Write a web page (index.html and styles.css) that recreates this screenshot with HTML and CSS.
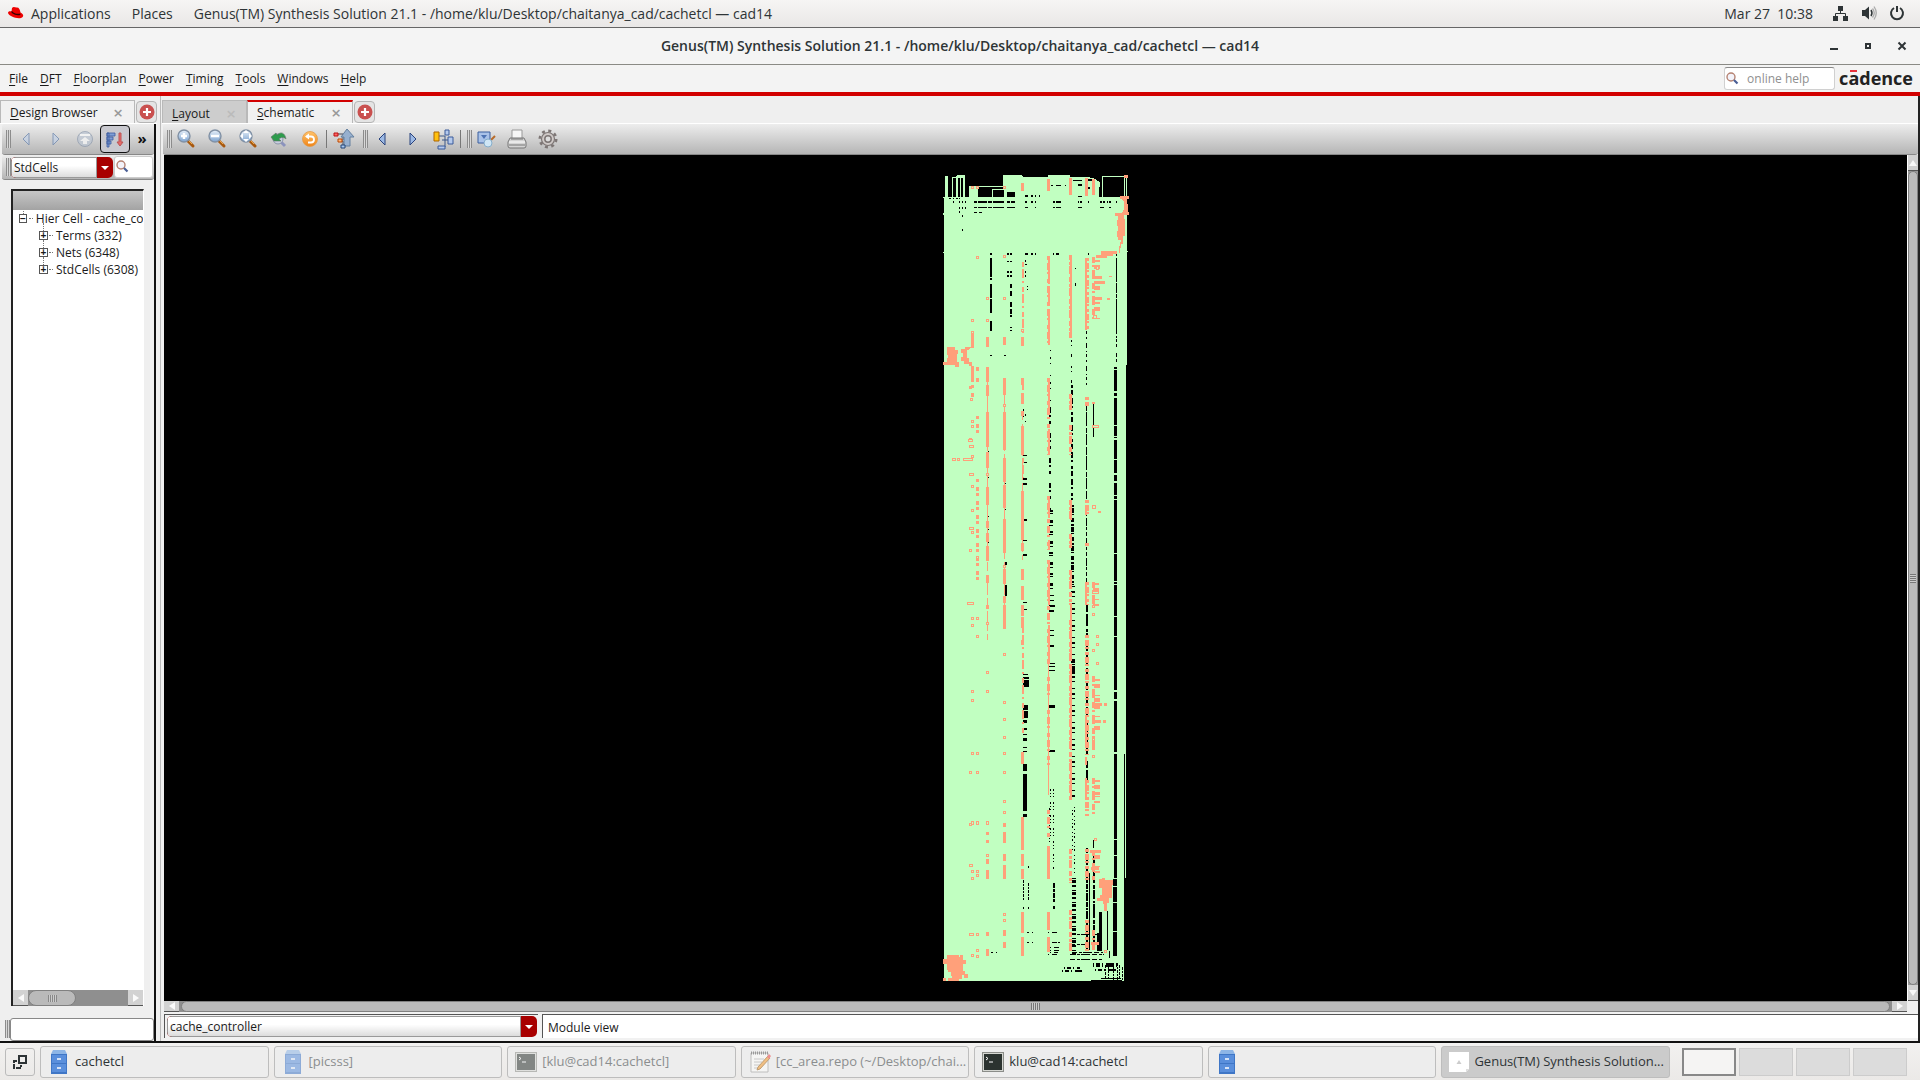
FILE: index.html
```html
<!DOCTYPE html>
<html lang="en">
<head>
<meta charset="utf-8">
<title>Genus(TM) Synthesis Solution 21.1</title>
<link rel="stylesheet" href="styles.css">
</head>
<body>
<svg class="defs" width="0" height="0" aria-hidden="true">
  <defs>
    <linearGradient id="blue" x1="0" y1="0" x2="0" y2="1"><stop offset="0" stop-color="#e8f1fa"/><stop offset="1" stop-color="#7da3cf"/></linearGradient>
    <linearGradient id="orange" x1="0" y1="0" x2="0" y2="1"><stop offset="0" stop-color="#ffc36b"/><stop offset="1" stop-color="#ee8418"/></linearGradient>
    <symbol id="lens" viewBox="0 0 20 20">
      <path d="M12 12l5 5" stroke="#a8590f" stroke-width="3" stroke-linecap="round"/>
      <path d="M12 11l4 4" stroke="#f0a848" stroke-width="1"/>
      <circle cx="8" cy="7" r="6" fill="url(#blue)" stroke="#8191a5" stroke-width="1.4"/>
    </symbol>
    <symbol id="search" viewBox="0 0 14 14">
      <circle cx="6" cy="5" r="4" fill="#f3f3fa" stroke="#b58272" stroke-width="1.4"/>
      <path d="M9 8l3.500 3.500" stroke="#4a5f96" stroke-width="2.200"/>
    </symbol>
    <symbol id="plus" viewBox="0 0 16 16">
      <circle cx="8" cy="8" r="7.500" fill="#c9504f"/><path d="M8 4v8M4 8h8" stroke="#fff" stroke-width="2.200"/>
    </symbol>
    <symbol id="cabinet" viewBox="0 0 16 24">
      <path d="M2 0h12l2 4H0z" fill="#8db5e6"/><path d="M0 4h16v20H0z" fill="#3f76c6"/>
      <path d="M1 5h14v8H1zM1 14h14v8H1z" fill="#5a8fdc"/><path d="M6 9h4M6 18h4" stroke="#fff" stroke-width="1.500"/>
    </symbol>
    <symbol id="terminal" viewBox="0 0 22 20">
      <path d="M0 0h22v20H0z" fill="#8b8d89"/><path d="M1 1h20v18H1z" fill="#d5d7d2"/><path d="M2 2h18v16H2z" fill="#2b3330"/>
      <path d="M4 5l2 1.500L4 8M7 10h4" fill="none" stroke="#fff"/>
    </symbol>
  </defs>
</svg>

<header class="panel">
  <svg class="hat" viewBox="0 0 16 12"><path d="M4 1c2-2 3 0 5-.5 2 0 3 2 3.500 5C16 7 16 10 13 11 8 12 1 9 0 6c0-2 2-2 3.500-1.500z" fill="#e00"/><path d="M3.500 4.500C5 7 9 8 12.300 7.200" fill="none" stroke="#300" stroke-width="1.400"/></svg>
  <a href="#" class="panel-apps">Applications</a>
  <a href="#" class="panel-places">Places</a>
  <a href="#">Genus(TM) Synthesis Solution 21.1 - /home/klu/Desktop/chaitanya_cad/cachetcl — cad14</a>
  <time>Mar 27 &nbsp;10:38</time>
  <div class="tray">
    <svg viewBox="0 0 16 16" width="16" height="16"><path d="M5 1h5v5H5zM0 11h5v5H0zM10 11h5v5h-5z" fill="#2e3436"/><path d="M7.500 6v2.500M2.500 11V8.500h10V11" fill="none" stroke="#2e3436"/></svg>
    <svg viewBox="0 0 16 16" width="16" height="16"><path d="M1 5h3l4-3.500v13L4 11H1z" fill="#2e3436"/><path d="M10 5q2 3 0 6" fill="none" stroke="#2e3436" stroke-width="1.500"/><path d="M11.500 3.500q3.500 4.500 0 9M13 1.500q4.500 6.500 0 13" fill="none" stroke="#aaa" stroke-width="1.300"/></svg>
    <svg viewBox="0 0 16 16" width="16" height="16"><path d="M5 3a6 6 0 1 0 6 0M8 1v6" fill="none" stroke="#2e3436" stroke-width="2"/></svg>
  </div>
</header>

<div class="titlebar">
  <h1>Genus(TM) Synthesis Solution 21.1 - /home/klu/Desktop/chaitanya_cad/cachetcl — cad14</h1>
  <div class="window-buttons">
    <button aria-label="Minimize"><svg viewBox="0 0 10 10"><path d="M1 8h8" stroke="#2e3436" stroke-width="2"/></svg></button>
    <button aria-label="Restore"><svg viewBox="0 0 10 10"><path d="M3 3h4v4H3z" fill="none" stroke="#2e3436" stroke-width="2"/></svg></button>
    <button aria-label="Close"><svg viewBox="0 0 10 10"><path d="M1.500 1.500l7 7M8.500 1.500l-7 7" stroke="#2e3436" stroke-width="2"/></svg></button>
  </div>
</div>

<nav class="menubar">
  <a href="#"><u>F</u>ile</a><a href="#"><u>D</u>FT</a><a href="#"><u>F</u>loorplan</a><a href="#"><u>P</u>ower</a><a href="#"><u>T</u>iming</a><a href="#"><u>T</u>ools</a><a href="#"><u>W</u>indows</a><a href="#"><u>H</u>elp</a>
  <label class="help-search"><svg width="14" height="14"><use href="#search"/></svg><input type="text" placeholder="online help" aria-label="online help"></label>
  <span class="brand">c<span class="macron">a</span>dence</span>
</nav>

<main class="workspace">
  <aside class="browser">
    <div class="tabs">
      <div class="tab active browser-tab"><span><u>D</u>esign Browser</span><button aria-label="Close tab">×</button></div>
      <button class="add" aria-label="Add"><svg width="16" height="16"><use href="#plus"/></svg></button>
    </div>
    <div class="browser-body">
      <div class="toolbar">
        <i class="grip"></i>
        <button class="tool faded" aria-label="Back"><svg width="20" height="20" viewBox="0 0 20 20"><path d="M13 4v12L7 10z" fill="#c3d2e8" stroke="#5d7ba8"/></svg></button>
        <button class="tool faded" aria-label="Forward"><svg width="20" height="20" viewBox="0 0 20 20"><path d="M7 4v12l6-6z" fill="#c3d2e8" stroke="#5d7ba8"/></svg></button>
        <button class="tool faded" aria-label="Up"><svg width="20" height="20" viewBox="0 0 20 20"><circle cx="10" cy="10" r="7.500" fill="#bcc6d4" stroke="#8795aa"/><path d="M5 6h10" stroke="#fff" stroke-width="2"/><path d="M10 8l5 4h-3v3H8v-3H5z" fill="#fff"/></svg></button>
        <button class="tool pressed" aria-label="Sort"><svg width="20" height="20" viewBox="0 0 20 20"><path d="M2 4h8v3H2zM2 8h6v3H2zM2 12h4v3H2zM2 4h2v14H2z" fill="#7f9fd6" stroke="#3d5c9e" stroke-width=".8"/><path d="M14 4h2v9h2l-3 4-3-4h2z" fill="#e76a6a" stroke="#b55"/></svg></button>
        <button class="tool more" aria-label="More">»</button>
      </div>
      <div class="toolbar filter">
        <i class="grip"></i>
        <span class="combo"><select aria-label="Object type"><option>StdCells</option></select></span>
        <label class="find"><svg width="14" height="14"><use href="#search"/></svg><input type="text" aria-label="Find"></label>
      </div>
      <div class="tree">
        <div class="tree-head"></div>
        <ul>
          <li class="root"><i class="box">−</i>Hier Cell - cache_co</li>
          <li><i class="box">+</i>Terms (332)</li>
          <li><i class="box">+</i>Nets (6348)</li>
          <li><i class="box">+</i>StdCells (6308)</li>
        </ul>
        <div class="hbar"><button class="left" aria-label="Scroll left"></button><span class="track"><i class="thumb"></i></span><button class="right" aria-label="Scroll right"></button></div>
      </div>
      <div class="prompt"><i class="grip"></i><input type="text" aria-label="Command"></div>
    </div>
  </aside>

  <section class="editor">
    <div class="tabs">
      <div class="tab layout-tab"><span><u>L</u>ayout</span><button aria-label="Close tab">×</button></div>
      <div class="tab active red schematic-tab"><span><u>S</u>chematic</span><button aria-label="Close tab">×</button></div>
      <button class="add" aria-label="Add"><svg width="16" height="16"><use href="#plus"/></svg></button>
    </div>
    <div class="toolbar main-tools">
      <i class="grip"></i>
      <button class="tool" aria-label="Zoom in"><svg width="20" height="20" viewBox="0 0 20 20"><use href="#lens"/><path d="M8 4v6M5 7h6" stroke="#fff" stroke-width="2.500"/></svg></button>
      <button class="tool" aria-label="Zoom out"><svg width="20" height="20" viewBox="0 0 20 20"><use href="#lens"/><path d="M4 7h8" stroke="#fff" stroke-width="2.500"/></svg></button>
      <button class="tool" aria-label="Zoom fit"><svg width="20" height="20" viewBox="0 0 20 20"><use href="#lens"/><path d="M8 1l3 3H5zM8 13l3-3H5zM2 7l3-3v6zM14 7l-3-3v6z" fill="#fff"/></svg></button>
      <button class="tool" aria-label="Zoom previous"><svg width="20" height="20" viewBox="0 0 20 20"><path d="M12 13l4 4" stroke="#8b93bd" stroke-width="3"/><circle cx="9" cy="10" r="5" fill="#c8cfe0" stroke="#8c94a8"/><path d="M2 8l5-4 1 2c4-4 8-2 9 4-2-2-5-2-7 0l2 2-7 0z" fill="#2d9b4c" stroke="#65746a" stroke-width=".6"/></svg></button>
      <button class="tool" aria-label="Redraw"><svg width="20" height="20" viewBox="0 0 20 20"><circle cx="10" cy="10" r="7.500" fill="url(#orange)" stroke="#e39a48" stroke-width=".8"/><path d="M6.500 7.500h4.500a3 3 0 0 1 0 6H8" fill="none" stroke="#fff" stroke-width="1.800"/><path d="M5 7.500l4-3v6z" fill="#fff"/></svg></button>
      <i class="rule"></i>
      <button class="tool" aria-label="Go up"><svg width="22" height="22" viewBox="0 0 22 22"><path d="M5 6h5v6M7 13h3M10 13v5" fill="none" stroke="#445"/><path d="M14 1l7 8h-4v9h-6V9H8z" fill="#97b0cf" stroke="#64809f"/><path d="M1 5h4v3H1z" fill="#f66" stroke="#b11"/><path d="M5 11h4v3H5z" fill="#ffb980" stroke="#b40"/><path d="M8 17h4v3H8z" fill="#a9c9f2" stroke="#247"/></svg></button>
      <i class="grip second"></i>
      <button class="tool" aria-label="Back"><svg width="20" height="20" viewBox="0 0 20 20"><path d="M13 4v12L7 10z" fill="#9cb9e4" stroke="#28427d"/></svg></button>
      <button class="tool" aria-label="Forward"><svg width="20" height="20" viewBox="0 0 20 20"><path d="M7 4v12l6-6z" fill="#9cb9e4" stroke="#28427d"/></svg></button>
      <button class="tool" aria-label="Hierarchy"><svg width="22" height="22" viewBox="0 0 22 22"><path d="M6 8h6v11M9 12h6M12 5h3" fill="none" stroke="#3b5688"/><path d="M1 4h5v9H1z" fill="#ffc10f" stroke="#ad6500"/><path d="M12 2h4v5h-4zM15 9h5v7h-5zM5 18h7v3H5z" fill="#b4c9ec" stroke="#3b5a9a"/></svg></button>
      <i class="rule"></i><i class="grip third"></i>
      <button class="tool" aria-label="Inspect"><svg width="20" height="20" viewBox="0 0 20 20"><path d="M2 3h12v11H2z" fill="#a9c2e8" stroke="#3a5e9e"/><path d="M5 6l3 4 3-4z" fill="#4d73b3"/><path d="M15 11l4-4" stroke="#b76b2a" stroke-width="2"/><circle cx="12" cy="14" r="4" fill="#cfe6f5" stroke="#86aecb"/></svg></button>
      <button class="tool" aria-label="Print"><svg width="22" height="22" viewBox="0 0 22 22"><path d="M6 2h10v9H6z" fill="#f6f6f6" stroke="#999"/><path d="M4 10h14l2 4v4q0 2-2 2H4q-2 0-2-2v-4z" fill="#d4d4d4" stroke="#777"/><path d="M5 11h12M3 17h16" stroke="#777"/><path d="M3 14h16" stroke="#fff"/></svg></button>
      <button class="tool" aria-label="Settings"><svg width="20" height="20" viewBox="0 0 20 20"><circle cx="10" cy="10" r="8.200" fill="none" stroke="#7d7675" stroke-width="2.600" stroke-dasharray="3 3.440"/><circle cx="10" cy="10" r="6.500" fill="#cfc9c7" stroke="#7d7675" stroke-width="1.200"/><circle cx="10" cy="10" r="3.200" fill="#ddd" stroke="#7d7675" stroke-width="1.500"/></svg></button>
    </div>
    <div class="view">
      <div class="canvas">
        <svg class="schematic" viewBox="940 170 192 816" width="192" height="816" shape-rendering="crispEdges" role="img" aria-label="Schematic">
          <g class="net-fill">
            <path d="M944 197V981H1124V878H1126V365H1127V197H1107V197H1100V182L1093 178H1090V177H1070V175H1048V177H1023L1022 175H1003V197H978V187H969V197z"/>
            <path d="M945 176h3v21h-3zM952 177h1v20h-1zM956 176h2v21h-2zM960 176h1v21h-1zM963 175h2v22h-2zM952 177h13v1h-13zM957 175h7v2h-7zM969 186h34v1h-34zM992 189h11v1h-11zM992 189h1v8h-1zM1102 176h25v1h-25zM1102 176h1v21h-1zM1124 176h1v21h-1zM1126 176h1v21h-1zM943 197h1v1h-1zM943 213h1v2h-1zM943 252h1v1h-1zM1127 251h1v1h-1z"/>
          </g>
          <g class="gap">
            <path d="M978 188h14v9h-14zM993 190h11v7h-11zM1007 192h8v5h-8zM1099 187h3v10h-3zM1124 754h1v124h-1z"/>
            <!-- horizontal breaks under the header -->
            <path d="M949 198h2v1h-2zM953 198h1v1h-1zM956 198h2v1h-2zM959 198h1v1h-1zM953 201h1v2h-1zM959 201h1v2h-1zM962 201h1v2h-1zM965 201h1v2h-1zM959 207h1v2h-1zM962 207h1v2h-1zM965 207h1v2h-1zM959 211h1v2h-1zM962 215h1v2h-1zM962 229h1v2h-1zM974 201h3v2h-3zM978 201h9v2h-9zM988 201h4v2h-4zM993 201h11v2h-11zM1007 201h3v2h-3zM1011 201h4v2h-4zM974 207h3v1h-3zM978 207h9v1h-9zM988 207h4v1h-4zM993 207h11v1h-11zM1007 207h8v1h-8zM974 212h3v1h-3zM979 212h3v1h-3z"/>
            <path d="M1025 195h3v2h-3zM1031 195h2v2h-2zM1035 195h1v2h-1zM1039 195h1v2h-1zM1025 201h2v2h-2zM1031 201h2v2h-2zM1035 201h1v2h-1zM1053 201h2v2h-2zM1056 201h5v2h-5zM1025 207h3v1h-3zM1035 207h1v1h-1zM1053 207h2v1h-2zM1056 207h5v1h-5zM1051 185h2v1h-2zM1056 185h5v1h-5zM1065 185h1v1h-1zM1073 180h9v1h-9zM1078 184h4v2h-4zM1078 196h4v1h-4zM1078 201h1v2h-1zM1080 201h2v2h-2zM1078 207h4v1h-4zM1088 201h1v2h-1zM1088 179h4v2h-4zM1088 187h2v2h-2zM1100 201h2v2h-2zM1103 201h2v2h-2zM1107 201h1v2h-1zM1109 201h2v2h-2zM1116 201h1v2h-1zM1100 207h4v1h-4zM1109 207h2v1h-2z"/>
            <path d="M1007 253h2v2h-2zM1010 253h2v2h-2zM1025 253h3v2h-3zM1031 253h2v2h-2zM1035 253h1v2h-1zM1053 253h1v2h-1zM1056 253h3v2h-3zM1088 253h1v2h-1zM1007 261h2v1h-2zM1010 261h2v1h-2zM1007 271h2v2h-2zM1010 271h2v2h-2zM1007 275h2v2h-2zM1010 275h2v2h-2zM1025 260h1v2h-1zM1025 264h2v1h-2zM1025 271h1v2h-1zM1025 275h1v2h-1zM1027 286h1v1h-1zM1027 289h1v1h-1zM1075 268h1v1h-1zM1075 283h1v3h-1zM990 355h2v1h-2zM1004 355h2v1h-2z"/>
          </g>
          <g class="gap-line">
            <path stroke-width="2" d="M991 253V255M991 258V277M991 278V280M991 284V298M991 299V313M991 321V331M1011 284V288M1011 291V296M1011 302V307M1011 309V314M1011 315V317M1011 327V328M1011 330V331M1006 562V565M1006 585V596"/>
            <path class="h" d="M1116 254V256M1116 258V282M1116 283V293M1116 294V298M1116 299V334M1116 336V338M1116 339V342M1116 344V347M1116 353V357M1116 359V362"/>
            <path class="h" stroke-width="3" d="M1115 367V369M1115 370V391M1115 393V396M1115 398V425M1115 426V436M1115 437V438M1115 440V459M1115 460V473M1115 475V481M1115 483V495M1115 496V499M1115 500V553M1115 554V581M1115 582V584M1115 585V616M1115 617V636M1115 637V690M1115 692V699M1115 701V752M1115 754V839M1115 840V855M1115 856V878"/>
            <path stroke-width="4" d="M1115 879V886M1115 887V902M1115 903V931M1115 932V956"/>
            <path stroke-width="3" class="h" d="M1100 912V951M1098 933V951"/>
            <path class="h" d="M1107 911V950M1093 404V437M1093 840V848M1089 873V950M1109 951V958"/>
            <path stroke-width="2" d="M1094 850V945" stroke-dasharray="4 1 9 2 2 1 14 2"/>
            <path class="h" stroke-dasharray="3 3 2 4 5 3 1 2" d="M1086 331V385"/>
            <path class="h" stroke-dasharray="8 1 14 2 5 1 11 2" d="M1086 403V500"/>
            <path class="h" stroke-dasharray="4 2 8 1 3 2" d="M1086 512V605"/>
            <path stroke-width="2" stroke-dasharray="7 2 12 3 3 1 5 6" d="M1087 605V780"/>
            <path stroke-width="2" stroke-dasharray="5 1 2 1 8 1" d="M1087 848V950"/>
            <path class="h" stroke-dasharray="2 3 1 8 3 9" d="M1071 340V385"/>
            <path stroke-width="2" stroke-dasharray="3 2 5 3 6 2 2 4" d="M1072 385V500"/>
            <path stroke-width="3" class="h" stroke-dasharray="2 1 5 1 1 3 4 2" d="M1072 505V585"/>
            <path stroke-width="4" stroke-dasharray="1 4 2 3 1 6" d="M1073 586V800"/>
            <path stroke-width="4" d="M1073 666V674M1073 661V663"/>
            <path class="h" stroke-dasharray="1 2 2 4 1 3" d="M1074 807V875M1072 810V850"/>
            <path stroke-width="4" stroke-dasharray="1 1 3 2 2 3" d="M1074 878V955"/>
            <path class="h" stroke-dasharray="1 6 2 4 1 11" d="M1050 350V408"/>
            <path stroke-width="2" stroke-dasharray="5 2 2 4 3 9" d="M1050 408V510"/>
            <path stroke-width="4" stroke-dasharray="2 1 1 6 3 2 1 5" d="M1051 510V590"/>
            <path stroke-width="5" class="h" stroke-dasharray="1 4 1 9 2 18" d="M1051 595V665"/>
            <path stroke-width="6" d="M1052 605V607M1052 663V664M1052 666V667M1052 670V671M1052 705V708M1052 750V752"/>
            <path class="h" stroke-dasharray="2 2 1 2 1 5" d="M1050 789V840M1053 789V870M1049 808V845"/>
            <path stroke-width="2" stroke-dasharray="5 1 3 1" d="M1054 883V902M1054 906V909"/>
            <path class="h" stroke-dasharray="2 5 1 12 1 8" d="M1023 380V430M1025 414V425"/>
            <path stroke-width="4" d="M1025 455V456M1025 462V463M1025 478V480M1025 483V485M1025 519V521M1025 540V541M1025 554V556M1025 602V603M1025 609V610"/>
            <path stroke-width="5" class="h" d="M1025 705V710M1025 711V718M1025 674V675"/>
            <path stroke-width="6" d="M1026 677V679M1026 680V687"/>
            <path stroke-width="4" d="M1025 720V723M1025 728V730M1025 734V735M1025 738V741M1025 747V748M1025 751V752M1025 764V771M1025 774V811M1025 814V817"/>
            <path class="h" stroke-dasharray="3 1 2 1" d="M1023 880V901M1028 883V901M1023 907V909M1028 907V909M1028 866V868"/>
            <path class="h" stroke-dasharray="1 12" d="M988 451V560M1005 483V560"/>
          </g>
          <!-- bottom bus fragments -->
          <g class="gap-line">
            <path class="v" stroke-dasharray="2 3 1 20" d="M1027 932H1045M1027 942H1045M991 952H1000"/>
            <path class="v" stroke-dasharray="1 3 5 1 2 5" d="M1048 932H1058M1048 942H1060M1050 947H1060M1050 950H1060M1050 952H1058M1048 954H1058"/>
            <path class="v" stroke-dasharray="5 2 3 1 9 2" d="M1070 934H1098M1070 944H1100M1072 952H1103M1070 954H1104M1070 959H1103"/>
            <path stroke-width="2" stroke-dasharray="1 2 4 2 1 3 8 2" d="M1064 968H1080M1062 971H1082M1093 964H1118M1093 966H1118M1095 970H1118"/>
            <path class="h" stroke-dasharray="3 1 2 1" d="M1105 965V978M1108 963V978M1113 963V980M1117 963V980M1122 967V980M1119 965V978"/>
            <path class="v" d="M1091 980H1122M1101 978H1121"/>
          </g>
          <g class="cell-line">
            <path class="h" stroke-width="3" d="M972 334V348M972 366V382M977 367V371M977 378V382M987 337V347M987 367V382M1004 337V345M1004 378V385M1022 183V191M1022 337V346M1022 378V385M1048 179V191M1070 178V195M1086 178V196M1093 179V195"/>
            <path class="h" stroke-width="3" d="M987 385V396M987 412V447M987 452V468M987 487V505M987 521V528M987 533V542M987 546V561M987 575V583M987 605V609M987 832V835M987 840V843M987 859V864M987 870V879M987 932V936M987 949V956"/>
            <path class="h" stroke-width="3" d="M1004 385V395M1004 412V450M1004 458V482M1004 485V508M1004 519V553M1004 569V584M1004 596V603M1004 605V629M1004 823V827M1004 832V843M1004 854V861M1004 865V879M1004 930V936M1004 942V948"/>
            <path class="h" stroke-width="3" d="M1022 393V404M1022 411V416M1022 426V455M1022 491V540M1022 543V551M1022 569V580M1022 586V600M1022 605V616M1022 617V628M1022 640V645M1022 752V764M1022 817V850M1022 854V866M1022 869V879M1022 912V933M1022 937V956"/>
            <path class="h" stroke-width="2" stroke-dasharray="5 2 9 3 2 4" d="M1022 262V335M1022 385V392M1022 458V478M1022 628V735"/>
            <path stroke-width="2" d="M1049 256V284M1049 289V305M1049 314V345M1049 378V410M1049 429V454M1049 496V518M1049 540V550M1049 560V605M1049 625V661"/>
            <path class="h" stroke-width="3" stroke-dasharray="4 3 7 2 2 5" d="M1048 256V345M1048 378V455M1048 496V550M1048 560V664M1048 677V700M1048 710V765M1048 810V840"/>
            <path class="h" d="M1048 664V795"/>
            <path class="h" stroke-width="3" d="M1048 846V879M1048 912V930M1048 937V952"/>
            <path stroke-width="2" d="M1071 255V338M1071 394V410M1071 500V520M1071 534V548M1071 570V584M1071 605V661M1071 665V750M1071 760V800"/>
            <path class="h" stroke-width="3" stroke-dasharray="5 2 3 1 8 3" d="M1070 255V338M1070 394V410M1070 425V455M1070 500V520M1070 534V548M1070 570V605M1070 620V800M1070 849V883M1070 910V953"/>
            <path stroke-width="2" d="M1086 258V330M1086 505V515M1086 585V605M1086 715V745M1086 757V765M1086 778V800"/>
            <path class="h" stroke-width="4" stroke-dasharray="3 2 6 1 2 3" d="M1086 258V330M1086 397V406M1086 500V515M1086 543V546M1086 582V605M1086 635V755M1086 780V816M1086 849V882M1086 920V953"/>
            <path class="h" stroke-width="3" stroke-dasharray="6 2 2 3 9 4" d="M1093 257V321M1093 582V608M1093 676V750M1093 778V814M1093 850V880M1093 930V950"/>
            <path stroke-width="6" stroke-dasharray="2 3 4 7 1 4" d="M1097 260V320M1096 583V608M1097 679V733M1097 780V805M1097 850V875"/>
            <path class="h" stroke-width="3" stroke-dasharray="3 5 4 2" d="M977 416V434M977 479V582M972 385V399M972 420V423M970 386V393M970 438V443"/>
            <path class="h" d="M987 382V640M1004 382V620M1022 411V560" stroke-dasharray="9 4 20 3"/>
            <path class="h" stroke-width="3" d="M1110 276V277M1108 298V300M1099 511V513M1102 282V283M1103 281V284M1104 720V723M1105 703V706"/>
          </g>
          <g class="cell-box">
            <path d="M971 186h2v2h-2zM976 186h2v2h-2zM1003 186h2v2h-2zM976 256h2v2h-2zM1003 255h2v2h-2zM986 297h2v2h-2zM1003 297h2v2h-2zM971 319h2v2h-2zM986 319h2v2h-2zM971 331h2v2h-2zM1021 329h2v2h-2zM970 398h2v2h-2zM1003 404h2v2h-2zM971 420h2v2h-2zM971 425h2v2h-2zM968 439h4v2h-4zM969 445h4v2h-4zM971 455h2v2h-2zM952 458h3v2h-3zM957 458h2v2h-2zM963 458h9v2h-9zM969 473h4v2h-4zM986 473h2v2h-2zM971 485h2v2h-2zM971 509h2v2h-2zM969 527h4v2h-4zM971 531h2v2h-2zM969 549h2v2h-2zM976 556h2v2h-2zM1003 565h2v2h-2zM967 602h6v2h-6z"/>
            <path d="M971 617h2v2h-2zM976 617h2v2h-2zM971 624h2v2h-2zM986 622h2v2h-2zM976 635h2v2h-2zM1003 653h2v2h-2zM986 671h2v2h-2zM971 690h2v2h-2zM986 690h2v2h-2zM971 699h2v2h-2zM1003 701h2v2h-2zM1003 718h2v2h-2zM1003 736h2v2h-2zM971 752h2v2h-2zM976 752h2v2h-2zM1003 752h2v2h-2zM969 771h2v2h-2zM976 771h2v2h-2zM1003 771h2v2h-2zM1003 800h2v2h-2zM1003 811h2v2h-2zM971 821h2v3h-2zM969 823h2v2h-2zM976 821h2v3h-2zM986 821h2v3h-2zM986 854h2v2h-2zM969 864h3v2h-3zM971 870h2v2h-2zM976 870h2v2h-2zM976 874h2v2h-2zM971 877h2v2h-2zM1003 913h2v2h-2zM1003 919h2v2h-2zM969 933h4v2h-4zM976 933h2v2h-2zM976 949h2v2h-2zM971 954h2v2h-2zM976 955h2v2h-2z"/>
            <path d="M1096 266h2v3h-2zM1092 425h6v2h-6zM1092 505h3v3h-3zM1092 613h2v2h-2zM1092 649h2v2h-2zM1096 635h2v2h-2zM1096 643h2v2h-2zM1096 662h2v2h-2zM1096 318h-3v-3h3zM1092 402h2v1h-2zM1092 591h6v2h-6zM1092 605h2v2h-2zM1092 738h2v2h-2zM1092 755h2v2h-2zM1094 838h2v2h-2zM1094 942h4v2h-4zM1104 950h2v2h-2z"/>
          </g>
          <g class="cell-fill">
            <path d="M1124 175h4v3h-4zM1120 196h9v3h-2v5h1v8h1v3h-5v4h1v17h-2v8h-2v4h-1v5h-1v-5l2-8h-3v-3h-1v-6h1v-5h-1v-6h1v-4h-3v-3h7l2-4v-7l-2-3h-2zM1101 251h16v3h-4v2h-6v2h-11v-3h5z"/>
            <path d="M947 347h8v3h3v4h-1v8h2v5h-4v-2h-12v-3h4v-4h1v-3h-1zM961 349h4v-2h6l-2 3h-2v8h2v4h3v4h-3v-2h-5v-3h-3v-4h2v-4h-2z"/>
            <path d="M1099 879h3v-1h3v2h8v5h-1v13h-3v5h-2v8h-3v-7h-1v-3h-6v-3h3v-3h2v-7h-3zM1090 850h11v3h-11zM1091 867h8v3h-8zM1091 942h8v3h-8z"/>
            <path d="M949 955h10v2h1v-2h3v5h3v4h-3v7h2v3h3v4h-4v-3h-2v4h-3v2h-11v-3h4v-2h-1v-4h-3v-2h-1v-6h-4v-5h4v-4z"/>
            <path d="M943 978h3v3h-3zM1094 276h8v3h-8zM1094 281h10v3h-10zM1094 297h8v3h-8zM1094 698h6v3h-6zM1094 703h8v3h-8zM1094 720h7v3h-7zM1094 792h6v3h-6z"/>
          </g>
        </svg>
      </div>
      <div class="vbar"><button class="up" aria-label="Scroll up"></button><i class="thumb"></i><button class="down" aria-label="Scroll down"></button></div>
      <div class="hbar slim"><button class="left" aria-label="Scroll left"></button><span class="track"><i class="thumb"></i></span><button class="right" aria-label="Scroll right"></button></div>
    </div>
    <div class="status">
      <div class="module"><span class="combo"><select aria-label="Module"><option>cache_controller</option></select></span></div>
      <output>Module view</output>
    </div>
  </section>
</main>

<footer class="taskbar">
  <button class="show-desktop" aria-label="Show desktop"><svg width="14" height="14" viewBox="0 0 14 14"><path d="M6 1h7v7H6z" fill="none" stroke="#2e3436" stroke-width="2"/><path d="M4 6H1v7h7v-3" fill="none" stroke="#2e3436" stroke-width="2" stroke-dasharray="5 1"/></svg></button>
  <div class="tasks">
    <button class="task"><svg width="16" height="24"><use href="#cabinet"/></svg><span>cachetcl</span></button>
    <button class="task dim"><svg width="16" height="24"><use href="#cabinet"/></svg><span>[picsss]</span></button>
    <button class="task wide dim"><svg width="22" height="20"><use href="#terminal"/></svg><span>[klu@cad14:cachetcl]</span></button>
    <button class="task wide dim"><svg width="22" height="22" viewBox="0 0 22 22"><path d="M2 2h17v19H2z" fill="#fdfdfb" stroke="#999"/><path d="M2 2h17" stroke="#555" stroke-width="3" stroke-dasharray="1 1"/><path d="M5 8h10M5 11h8M5 14h7M5 17h6" stroke="#aaa"/><path d="M19 5l2 2-10 11-3 1 1-3z" fill="#f59a2c" stroke="#9b5d10"/><path d="M18 6l2-3 2 2-2 3z" fill="#e44"/></svg><span>[cc_area.repo (~/Desktop/chai...</span></button>
    <button class="task wide"><svg width="22" height="20"><use href="#terminal"/></svg><span>klu@cad14:cachetcl</span></button>
    <button class="task" aria-label="Files"><svg width="16" height="24"><use href="#cabinet"/></svg></button>
    <button class="task wide current"><svg width="20" height="20" viewBox="0 0 20 20"><path d="M0 0h20v17l-3 3H0z" fill="#fff"/><path d="M10 8l2.500 4h-5z" fill="#ccc"/><path d="M17 20v-3h3z" fill="#ddd"/></svg><span>Genus(TM) Synthesis Solution...</span></button>
  </div>
  <div class="desktops"><button class="on" aria-label="Workspace 1"></button><button aria-label="Workspace 2"></button><button aria-label="Workspace 3"></button><button aria-label="Workspace 4"></button></div>
</footer>
</body>
</html>
```
FILE: styles.css
```css
* { box-sizing: border-box; }
html, body { height: 100%; }
body {
  margin: 0;
  display: flex;
  flex-direction: column;
  background: #efefef;
  color: #1a1a1a;
  font: 12px/17px "Open Sans", "Noto Sans", sans-serif;
  overflow: hidden;
}
button, input, select { font: inherit; color: inherit; margin: 0; padding: 0; border: 0; background: none; }
a { color: inherit; text-decoration: none; }
u { text-underline-offset: 2px; }
svg { display: block; flex: none; }
.defs { position: absolute; }

/* desktop panel */
.panel {
  display: flex;
  align-items: center;
  height: 28px;
  padding: 0 15px 1px 8px;
  border-bottom: 1px solid #666;
  background: linear-gradient(#f6f5f4, #e9e7e6);
  color: #2e3436;
  font-size: 14px;
  white-space: nowrap;
}
.hat { width: 16px; height: 12px; margin-right: 7px; }
.panel-apps, .panel-places { margin-right: 21px; }
.panel time { margin-left: auto; margin-right: 20px; }
.tray { display: flex; gap: 12px; }

.titlebar {
  display: grid;
  grid-template-columns: 1fr auto 1fr;
  align-items: center;
  height: 37px;
  padding-bottom: 1px;
  border-bottom: 1px solid #8a8a85;
  background: #f4f4f4;
}
.titlebar h1 { grid-column: 2; margin: 0; color: #2e3436; font-size: 14px; font-weight: 600; white-space: nowrap; }
.window-buttons { display: flex; justify-content: flex-end; gap: 24px; padding-right: 13px; }
.window-buttons svg { width: 10px; height: 10px; }

.menubar {
  display: flex;
  align-items: center;
  gap: 12px;
  height: 31px;
  padding: 0 7px 0 9px;
  border-bottom: 4px solid #d20000;
  background: #f3f3f3;
}
.help-search {
  display: flex;
  align-items: center;
  width: 111px;
  height: 23px;
  margin-left: auto;
  border: 1px solid #d0d0d0;
  border-top-color: #888;
  border-radius: 3px;
  background: #fff;
}
.help-search input { width: 84px; margin-left: 8px; }
.help-search input::placeholder { color: #8f8f8f; opacity: 1; }
.brand { margin-left: -8px; color: #222; font-size: 18px; font-weight: 700; }
.macron { position: relative; }
.macron::before { content: ""; position: absolute; top: 4px; left: 2px; width: 7px; height: 2px; background: #e8323c; }

/* workspace */
.workspace { flex: 1; display: flex; min-height: 0; border-bottom: 2px solid #111; }
.browser { display: flex; flex-direction: column; width: 157px; }
.browser-body { flex: 1; display: flex; flex-direction: column; margin-right: 1px; padding-left: 2px; border-right: 2px solid #111; }
.editor { flex: 1; display: flex; flex-direction: column; min-width: 0; margin-left: 3px; padding-left: 3px; border-left: 1px solid #bbb; border-right: 2px solid #222; }
.tabs { display: flex; align-items: flex-end; height: 28px; border-bottom: 1px solid #fff; }
.editor .tabs { margin-left: -2px; }
.tab {
  display: flex;
  align-items: center;
  justify-content: space-between;
  height: 23px;
  padding: 0 11px 0 9px;
  border: 1px solid #b9b9b9;
  border-bottom: 0;
  background: #cdcdcd;
}
.tab.active { background: #f1f1f1; }
.tab.red { border-top: 2px solid #d20000; }
.tab button { color: #999; font-size: 17px; font-weight: 600; }
.tab:not(.active) button { color: #bbb; }
.browser-tab { width: 135px; }
.layout-tab { width: 85px; padding: 2px 10px 0 9px; }
.schematic-tab { width: 106px; }
.add {
  display: flex;
  align-items: center;
  justify-content: center;
  width: 21px;
  height: 22px;
  margin-left: 1px;
  border: 1px solid #b5b5b5;
  border-radius: 4px;
  background: #e4e4e4;
}

.toolbar {
  display: flex;
  align-items: center;
  height: 31px;
  border-bottom: 1px solid #888;
  border-radius: 3px;
  background: linear-gradient(#ededed, #b5b5b5);
}
.grip { flex: none; width: 5px; height: 18px; background: repeating-linear-gradient(90deg, #8c8c8c 0 1px, #d8d8d8 1px 2px); }
.tool { display: flex; align-items: center; justify-content: center; width: 31px; height: 28px; }
.browser .toolbar { padding-left: 4px; }
.browser .tool { width: 30px; }
.browser .tool.more { width: 24px; font-size: 15px; font-weight: 700; padding-bottom: 2px; color: #111; }
.faded { opacity: .65; }
.tool.pressed { border: 1px solid #111; border-radius: 4px; background: #c9c9cf; }
.main-tools { padding-left: 4px; margin-left: -1px; }
.main-tools .grip { margin-right: -2px; }
.main-tools .second { margin-left: 4px; }
.rule { width: 1px; height: 18px; margin: 0 1px; background: #777; }
.third { margin-left: 5px; }

.toolbar.filter { height: 25px; }
.combo { position: relative; display: flex; border-radius: 5px; overflow: hidden; background: #a80000; }
.combo select {
  flex: 1;
  appearance: none;
  height: 21px;
  margin-right: 16px;
  padding: 0 2px;
  border: 1px solid #999;
  background: linear-gradient(#fff 40%, #dcdcdc);
}
.combo::after { content: ""; position: absolute; right: 4px; top: 9px; border: 4px solid transparent; border-top-color: #fff; border-bottom: 0; pointer-events: none; }
.filter .combo { width: 102px; }
.find { display: flex; align-items: center; width: 39px; height: 22px; margin-left: 1px; border: 1px solid #ccc; border-radius: 3px; background: #fff; }
.find input { width: 20px; }

.tree { flex: 1; display: flex; flex-direction: column; margin: 9px 10px 11px 9px; border: 2px solid #222; border-right: 1px solid #fff; border-bottom: 0; background: #fff; overflow: hidden; }
.tree-head { height: 19px; background: linear-gradient(#c6c6c6, #a3a3a3); }
.tree ul { flex: 1; margin: 0; padding: 0 0 0 26px; list-style: none; }
.tree li { display: flex; align-items: center; gap: 8px; height: 17px; white-space: nowrap; }
.tree .root { margin-left: -20px; gap: 9px; }
.box { position: relative; display: flex; align-items: center; justify-content: center; width: 9px; height: 9px; border: 1px solid #555; font: 700 10px/7px "Liberation Sans", sans-serif; }
.box::before { content: ""; position: absolute; left: 3px; bottom: 8px; height: 8px; border-left: 1px dotted #777; }
.root .box::before { height: 3px; }
.box::after { content: ""; position: absolute; left: 9px; top: 3px; width: 4px; border-top: 1px dotted #777; }
.prompt { display: flex; align-items: center; height: 24px; padding-left: 3px; }
.prompt input { flex: 1; width: 20px; height: 23px; border: 1px solid #888; border-radius: 3px; background: #fff; }

/* scroll bars */
.hbar { display: flex; height: 16px; }
.hbar button, .vbar button { display: flex; align-items: center; justify-content: center; flex: none; width: 15px; background: #d2d2d2; border-bottom: 1px solid #555; }
.hbar button::before, .vbar button::before { content: ""; border: 4px solid transparent; }
.hbar .left::before { border-right: 6px solid #fafafa; border-left: 0; }
.hbar .right::before { border-left: 6px solid #fafafa; border-right: 0; }
.track { flex: 1; display: flex; background: #8f8f8f; }
.thumb { display: block; border: 1px solid #808080; border-radius: 8px; background-color: #bababa; }
.tree .thumb { width: 48px; background: repeating-linear-gradient(90deg, #888 0 1px, #ccc 1px 2px) center / 9px 7px no-repeat #bababa; }
.slim { height: 11px; }
.slim .thumb { flex: 1; margin: 0 2px; background: repeating-linear-gradient(90deg, #777 0 1px, #ccc 1px 2px) center / 9px 7px no-repeat #bababa; }
.vbar { display: flex; flex-direction: column; width: 11px; background: #999; border-left: 1px solid #fff; }
.vbar button { width: 10px; height: 16px; }
.vbar .thumb { flex: 1; background: repeating-linear-gradient(#777 0 1px, #ccc 1px 2px) center / 6px 9px no-repeat #bababa; }
.vbar .up::before { border-bottom: 6px solid #fafafa; border-top: 0; }
.vbar .down::before { border-top: 6px solid #fafafa; border-bottom: 0; }

.view { flex: 1; display: grid; grid-template: 1fr auto / 1fr auto; min-height: 0; }
.canvas { display: flex; justify-content: center; align-items: center; min-height: 0; overflow: hidden; background: #000; }
.net-fill, .gap, .cell-fill { stroke: none; }
.net-fill { fill: #c1ffc1; }
.gap { fill: #000; }
.gap-line { fill: none; stroke: #000; }
.cell-line { fill: none; stroke: #ffa07a; }
.cell-fill { fill: #ffa07a; }
.cell-box { fill: #c1ffc1; stroke: #ffa07a; transform: translate(.5px, .5px); }
.h { transform: translateX(.5px); }
.v { transform: translateY(.5px); }

.status { display: flex; gap: 4px; height: 29px; padding: 2px 0 3px; background: #f1f1f1; }
.module { width: 374px; padding: 1px 1px 1px 2px; border-top: 1px solid #555; border-left: 1px solid #555; }
.status output { flex: 1; padding: 4px 5px 2px; border-top: 1px solid #555; border-left: 1px solid #555; background: #fff; }

/* taskbar */
.taskbar { display: flex; align-items: center; height: 37px; padding: 0 13px 0 5px; background: linear-gradient(#f2f1f0, #ebe9e7); font-size: 13px; color: #2e3436; }
.show-desktop { display: flex; align-items: center; justify-content: center; width: 30px; height: 28px; border: 1px solid #bbb; border-radius: 3px; }
.tasks { flex: 1; display: grid; grid-template-columns: repeat(7, minmax(0, 1fr)); gap: 5px; margin: 0 12px 0 5px; }
.task { display: flex; align-items: center; gap: 8px; height: 32px; padding: 0 10px; border: 1px solid #bdbdbd; border-radius: 3px; background: #ededed; white-space: nowrap; }
.task.wide { padding: 0 7px; gap: 5px; }
.dim svg { opacity: .55; }
.dim span { color: #8b8e8f; }
.task.current { background: #cbcbcb; }
.desktops { display: flex; gap: 3px; }
.desktops button { width: 54px; height: 28px; border: 1px solid #ccc; background: #dcdcdc; }
.desktops .on { border: 2px solid #888; background: #f5f4f3; }
```
